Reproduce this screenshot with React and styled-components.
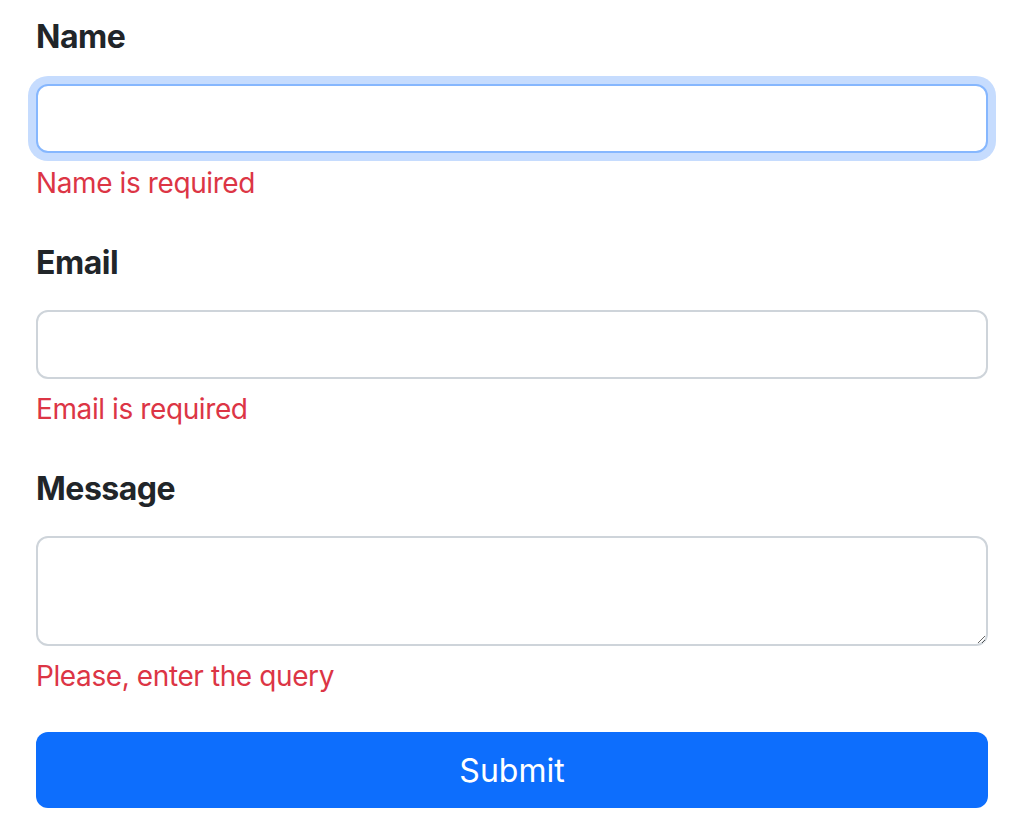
import React, {useState} from 'react';
import styled, {createGlobalStyle} from 'styled-components';

const GlobalStyle = createGlobalStyle`
  body {
    margin: 0;
    background: #ffffff;
    font-family: Inter, "Liberation Sans", sans-serif;
    color: #212529;
  }
`

function ContactForm() {
  const [name, setName] = useState('')
  const [email, setEmail] = useState('')
  const [message, setMessage] = useState('')

  return (
    <Form onSubmit={e => e.preventDefault()}>
      <Group>
        <Label htmlFor="name">Name</Label>
        <Input id="name" type="text" value={name} onChange={e => setName(e.target.value)} focused />
        <Feedback>Name is required</Feedback>
      </Group>
      <Group>
        <Label htmlFor="email">Email</Label>
        <Input id="email" type="email" value={email} onChange={e => setEmail(e.target.value)} />
        <Feedback>Email is required</Feedback>
      </Group>
      <Group>
        <Label htmlFor="message">Message</Label>
        <TextArea id="message" value={message} onChange={e => setMessage(e.target.value)} />
        <Feedback>Please, enter the query</Feedback>
      </Group>
      <SubmitButton type="submit">Submit</SubmitButton>
    </Form>
  )
}

const Form = styled.form`
  display: flex;
  flex-direction: column;
  width: 952px;
  padding: 13px 0 0 36px;
`

const Group = styled.div`
  display: flex;
  flex-direction: column;
  margin-bottom: 35px;
`

const Label = styled.label`
  font-size: 32px;
  line-height: 48px;
  font-weight: 700;
  letter-spacing: -0.5px;
  color: #212529;
  margin-bottom: 23px;
`

const Input = styled.input`
  box-sizing: border-box;
  height: 69px;
  width: 100%;
  padding: 12px 24px;
  font-family: inherit;
  font-size: 32px;
  color: #212529;
  background: #fff;
  border: 2px solid ${p => p.focused ? '#86b7fe' : '#ced4da'};
  border-radius: 12px;
  outline: none;
  box-shadow: ${p => p.focused ? '0 0 0 8px #c6dcfe' : 'none'};
`

const TextArea = styled.textarea`
  box-sizing: border-box;
  height: 110px;
  width: 100%;
  padding: 12px 24px;
  font-family: inherit;
  font-size: 32px;
  color: #212529;
  background: #fff;
  border: 2px solid #ced4da;
  border-radius: 12px;
  outline: none;
  resize: vertical;
`

const Feedback = styled.div`
  margin-top: 9px;
  font-size: 28px;
  line-height: 42px;
  letter-spacing: -0.4px;
  color: #dc3545;
`

const SubmitButton = styled.button`
  height: 76px;
  width: 100%;
  border: none;
  border-radius: 12px;
  background: #0d6efd;
  color: #fff;
  font-family: inherit;
  font-size: 32px;
  cursor: pointer;
`

export default function App() {
  return (
    <>
      <GlobalStyle />
      <ContactForm />
    </>
  )
}
